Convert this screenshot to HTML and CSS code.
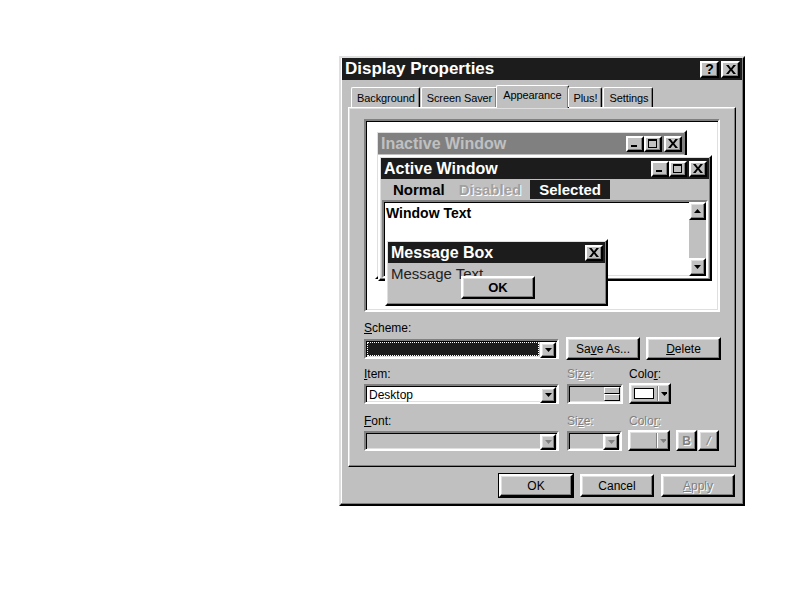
FILE: index.html
```html
<!DOCTYPE html>
<html lang="en">
<head>
  <meta charset="UTF-8" />
  <title>Display Properties</title>
  <link rel="stylesheet" href="styles.css">
</head>
<body>
  <div class="dialog">
    <div class="titlebar">
      <span class="title">Display Properties</span>
      <div class="caption-btns">
        <button class="cap-btn help">?</button>
        <button class="cap-btn close">
          <svg width="10" height="9" viewBox="0 0 10 9"><path d="M0 0h2.6L5 3.2 7.4 0H10L6.3 4.5 10 9H7.4L5 5.8 2.6 9H0l3.7-4.5z" fill="#000"/></svg>
        </button>
      </div>
    </div>

    <div class="tabs">
      <div class="tab">Background</div>
      <div class="tab">Screen Saver</div>
      <div class="tab active">Appearance</div>
      <div class="tab">Plus!</div>
      <div class="tab">Settings</div>
    </div>

    <div class="panel">
      <div class="preview sunken">
        <div class="win inactive-win raised">
          <div class="win-title gray">
            <span>Inactive Window</span>
            <div class="win-btns">
              <span class="wbtn"><svg width="10" height="9"><rect x="1" y="6" width="6" height="2"/></svg></span>
              <span class="wbtn"><svg width="10" height="9"><path d="M0 0h9v9H0zM1 2v6h7V2z" fill-rule="evenodd"/></svg></span>
              <span class="wbtn gap"><svg width="10" height="9" viewBox="0 0 10 9"><path d="M0 0h2.6L5 3.2 7.4 0H10L6.3 4.5 10 9H7.4L5 5.8 2.6 9H0l3.7-4.5z"/></svg></span>
            </div>
          </div>
        </div>

        <div class="win active-win raised">
          <div class="win-title dark">
            <span>Active Window</span>
            <div class="win-btns">
              <span class="wbtn"><svg width="10" height="9"><rect x="1" y="6" width="6" height="2"/></svg></span>
              <span class="wbtn"><svg width="10" height="9"><path d="M0 0h9v9H0zM1 2v6h7V2z" fill-rule="evenodd"/></svg></span>
              <span class="wbtn gap"><svg width="10" height="9" viewBox="0 0 10 9"><path d="M0 0h2.6L5 3.2 7.4 0H10L6.3 4.5 10 9H7.4L5 5.8 2.6 9H0l3.7-4.5z"/></svg></span>
            </div>
          </div>
          <div class="menubar">
            <span class="menu-item">Normal</span>
            <span class="menu-item disabled">Disabled</span>
            <span class="menu-item selected">Selected</span>
          </div>
          <div class="text-area sunken">
            <div class="win-text">Window Text</div>
            <div class="scrollbar">
              <span class="sbtn raised"><svg width="7" height="4"><path d="M3.5 0L7 4H0z"/></svg></span>
              <span class="track"></span>
              <span class="sbtn raised"><svg width="7" height="4"><path d="M0 0h7L3.5 4z"/></svg></span>
            </div>
          </div>
        </div>

        <div class="win msgbox raised">
          <div class="win-title dark">
            <span>Message Box</span>
            <div class="win-btns">
              <span class="wbtn"><svg width="10" height="9" viewBox="0 0 10 9"><path d="M0 0h2.6L5 3.2 7.4 0H10L6.3 4.5 10 9H7.4L5 5.8 2.6 9H0l3.7-4.5z"/></svg></span>
            </div>
          </div>
          <div class="msg-text">Message Text</div>
          <button class="btn msg-ok">OK</button>
        </div>
      </div>

      <div class="form">
        <div class="label"><u>S</u>cheme:</div>
        <div class="row first">
          <div class="combo sunken w-main scheme">
            <span class="combo-value"></span>
            <span class="drop raised"><svg width="7" height="4"><path d="M0 0h7L3.5 4z"/></svg></span>
          </div>
          <button class="btn save-as">Sa<u>v</u>e As...</button>
          <button class="btn delete"><u>D</u>elete</button>
        </div>

        <div class="row labels item-labels">
          <span class="label w-main"><u>I</u>tem:</span>
          <span class="label dim w-size">Si<u>z</u>e:</span>
          <span class="label w-color">Colo<u>r</u>:</span>
        </div>
        <div class="row">
          <div class="combo sunken w-main white">
            <span class="combo-value">Desktop</span>
            <span class="drop raised"><svg width="7" height="4"><path d="M0 0h7L3.5 4z"/></svg></span>
          </div>
          <div class="spin sunken w-size">
            <span class="spin-btns">
              <span class="spin-btn raised"></span>
              <span class="spin-btn raised"></span>
            </span>
          </div>
          <div class="color-btn raised w-color">
            <span class="swatch"></span>
            <span class="cbar"></span>
            <svg width="7" height="4"><path d="M0 0h7L3.5 4z"/></svg>
          </div>
        </div>

        <div class="row labels font-labels">
          <span class="label w-main"><u>F</u>ont:</span>
          <span class="label dim w-size">Si<u>z</u>e:</span>
          <span class="label dim w-color">Colo<u>r</u>:</span>
        </div>
        <div class="row">
          <div class="combo sunken w-main">
            <span class="combo-value"></span>
            <span class="drop raised off"><svg width="7" height="4"><path d="M0 0h7L3.5 4z"/></svg></span>
          </div>
          <div class="combo sunken w-size2">
            <span class="combo-value"></span>
            <span class="drop raised off"><svg width="7" height="4"><path d="M0 0h7L3.5 4z"/></svg></span>
          </div>
          <div class="color-btn raised w-color off">
            <span class="swatch blank"></span>
            <span class="cbar"></span>
            <svg width="7" height="4"><path d="M0 0h7L3.5 4z"/></svg>
          </div>
          <button class="btn small dim bold-btn">B</button>
          <button class="btn small dim">/</button>
        </div>
      </div>
    </div>

    <div class="footer">
      <button class="btn default">OK</button>
      <button class="btn">Cancel</button>
      <button class="btn dim"><u>A</u>pply</button>
    </div>
  </div>
</body>
</html>
```

FILE: styles.css
```css
* { box-sizing: border-box; }
body {
  margin: 0;
  background: #fff;
  font-family: "Liberation Sans", Arial, sans-serif;
  font-size: 12px;
  color: #000;
  padding: 56px 0 0 339px;
}
button {
  font-family: inherit;
  font-size: 12px;
  color: #000;
  padding: 0;
  cursor: default;
}
.raised {
  border: 2px solid;
  border-color: #fff #000 #000 #fff;
  box-shadow: inset -1px -1px #808080, inset 1px 1px #dfdfdf;
}
.sunken {
  border: 2px solid;
  border-color: #808080 #fff #fff #808080;
  box-shadow: inset 1px 1px #000, inset -1px -1px #dfdfdf;
}
.dialog {
  width: 406px;
  height: 450px;
  background: #c0c0c0;
  border: 2px solid;
  border-color: #dfdfdf #000 #000 #dfdfdf;
  box-shadow: inset -1px -1px #808080, inset 1px 1px #fff;
  padding: 0 1px;
}
.titlebar {
  height: 22px;
  background: #1c1c1c;
  display: flex;
  align-items: center;
  justify-content: space-between;
  padding: 0 2px 0 3px;
  color: #fff;
}
.title {
  font-size: 17px;
  font-weight: bold;
}
.caption-btns { display: flex; gap: 2px; }
.cap-btn {
  width: 19px;
  height: 17px;
  background: #c0c0c0;
  border: 2px solid;
  border-color: #fff #000 #000 #fff;
  box-shadow: inset -1px -1px #808080;
  display: flex;
  align-items: center;
  justify-content: center;
}
.cap-btn.help { font-weight: bold; font-size: 14px; line-height: 1; }

.tabs {
  display: flex;
  margin-top: 6px;
  padding-left: 9px;
  height: 21px;
  align-items: flex-end;
  position: relative;
  z-index: 1;
}
.tab {
  height: 20px;
  padding: 4px 4px 0 5px;
  border: 1px solid;
  border-bottom: none;
  border-color: #fff #000 #000 #fff;
  border-radius: 2px 2px 0 0;
  box-shadow: inset -1px 0 #808080;
  margin-right: 1px;
  font-size: 11px;
  letter-spacing: -0.1px;
  white-space: nowrap;
}
.tab.active {
  height: 23px;
  margin: 0 -1px -1px -2px;
  padding: 3px 6px 0;
  background: #c0c0c0;
}

.panel {
  margin: 0 6px;
  height: 360px;
  border: 1px solid;
  border-color: #fff #000 #000 #fff;
  box-shadow: inset -1px -1px #808080, inset 1px 1px #dfdfdf;
  padding: 11px 0 0 15px;
}
.preview {
  width: 356px;
  height: 193px;
  background: #fff;
  position: relative;
}
.win {
  position: absolute;
  background: #c0c0c0;
  padding: 1px;
}
.inactive-win { left: 9px; top: 9px; width: 312px; height: 149px; }
.active-win { left: 12px; top: 34px; width: 334px; height: 126px; }
.msgbox { left: 19px; top: 118px; width: 223px; height: 67px; }
.win-title {
  height: 21px;
  display: flex;
  align-items: center;
  justify-content: space-between;
  padding: 0 2px 0 3px;
  font-size: 16px;
  font-weight: bold;
}
.win-title.gray { background: #808080; color: #c0c0c0; }
.win-title.dark { background: #1c1c1c; color: #fff; }
.win-btns { display: flex; }
.wbtn {
  width: 18px;
  height: 16px;
  background: #c0c0c0;
  border: 2px solid;
  border-color: #fff #000 #000 #fff;
  box-shadow: inset -1px -1px #808080;
  display: flex;
  align-items: center;
  justify-content: center;
}
.wbtn.gap { margin-left: 2px; }
.wbtn svg { fill: #000; }

.menubar {
  height: 21px;
  display: flex;
  align-items: center;
  padding-left: 6px;
  font-size: 15px;
  font-weight: bold;
}
.menu-item { padding: 1px 6px; }
.menu-item.disabled { color: #a0a0a0; text-shadow: 1px 1px #fff; margin-left: 2px; }
.menu-item.selected { background: #1c1c1c; color: #fff; padding: 1px 9px; margin-left: 3px; }

.text-area {
  height: 78px;
  margin: 0 1px;
  background: #fff;
  display: flex;
  justify-content: space-between;
}
.win-text {
  font-size: 14px;
  font-weight: bold;
  padding: 3px 2px;
}
.scrollbar {
  width: 17px;
  display: flex;
  flex-direction: column;
  background: #c0c0c0;
}
.sbtn {
  height: 18px;
  background: #c0c0c0;
  display: flex;
  align-items: center;
  justify-content: center;
}
.track { flex: 1; }

.msg-text {
  font-size: 15px;
  padding: 2px 3px 0;
  color: #222;
}
.msg-ok {
  position: absolute;
  left: 74px;
  top: 35px;
  width: 72px;
  height: 24px;
  font-weight: bold;
  font-size: 13px;
}

.btn {
  background: #c0c0c0;
  border: 2px solid;
  border-color: #fff #000 #000 #fff;
  box-shadow: inset -1px -1px #808080, inset 1px 1px #dfdfdf;
  width: 74px;
  height: 23px;
}
.btn.default { outline: 1px solid #000; }
.dim { color: #808080; text-shadow: 1px 1px #fff; }

.form { margin-top: 10px; }
.label { height: 13px; line-height: 13px; }
.row {
  display: flex;
  align-items: center;
}
.row.first { margin-top: 2px; }
.row.labels { height: 13px; }
.item-labels { margin-top: 8px; }
.font-labels { margin-top: 11px; }
.row.labels + .row { margin-top: 2px; }
.w-main { width: 195px; flex: none; }
.w-size { width: 56px; margin-left: 8px; flex: none; }
.w-size2 { width: 55px; margin-left: 8px; flex: none; }
.w-color { width: 42px; margin-left: 6px; flex: none; }

.combo {
  height: 20px;
  display: flex;
  background: #c0c0c0;
  padding: 1px;
}
.combo.white { background: #fff; }
.combo-value {
  flex: 1;
  padding-left: 2px;
  line-height: 16px;
}
.combo.scheme .combo-value {
  background: #1c1c1c;
  outline: 1px dotted #fff;
  outline-offset: -1px;
  margin-right: 1px;
}
.drop {
  width: 16px;
  height: 16px;
  background: #c0c0c0;
  display: flex;
  align-items: center;
  justify-content: center;
}
.drop.off svg { fill: #808080; }
.save-as { margin-left: 7px; }
.delete { margin-left: 6px; width: 75px; }

.spin {
  height: 20px;
  display: flex;
  justify-content: flex-end;
  padding: 1px;
}
.spin-btns { display: flex; flex-direction: column; width: 16px; }
.spin-btn { flex: 1; background: #c0c0c0; border-width: 1px; box-shadow: none; }

.color-btn {
  height: 21px;
  background: #c0c0c0;
  display: flex;
  align-items: center;
  padding: 0 2px 0 2px;
}
.swatch {
  width: 23px;
  height: 11px;
  background: #fff;
  border: 1px solid #000;
  margin-left: 1px;
}
.swatch.blank { background: #c0c0c0; border: none; }
.cbar {
  width: 2px;
  height: 15px;
  border-left: 1px solid #808080;
  border-right: 1px solid #fff;
  margin: 0 2px 0 3px;
}
.color-btn.off svg { fill: #808080; }
.small { width: 21px; height: 21px; margin-left: 6px; font-weight: bold; }
.small + .small { margin-left: 1px; font-style: italic; font-weight: normal; }

.footer {
  display: flex;
  justify-content: flex-end;
  gap: 7px;
  margin-top: 7px;
  padding-right: 7px;
}
```
